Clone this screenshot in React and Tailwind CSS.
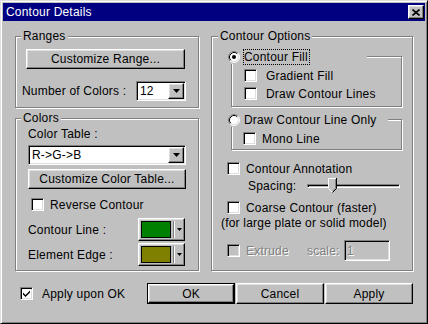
import React from 'react';

const raised =
  'bg-[#c0c0c0] border border-t-white border-l-white border-r-black border-b-black shadow-[inset_-1px_-1px_0_#808080,inset_1px_1px_0_#dfdfdf]';
const sunken =
  'border border-t-[#808080] border-l-[#808080] border-r-white border-b-white shadow-[inset_1px_1px_0_#000,inset_-1px_-1px_0_#dfdfdf]';
const etched = 'border border-[#808080] shadow-[inset_1px_1px_0_#fff,1px_1px_0_#fff]';
const disabledText = 'text-[#808080] [text-shadow:1px_1px_0_#fff]';

const Check = ({ checked, disabled }) => (
  <div className={`w-[13px] h-[13px] shrink-0 flex items-center justify-center ${sunken} ${disabled ? 'bg-[#c0c0c0]' : 'bg-white'}`}>
    {checked && (
      <svg width="9" height="9" viewBox="0 0 9 9">
        <path d="M1 3.5 L3.5 6 L8 1.5 V3.5 L3.5 8 L1 5.5 Z" fill="#000" />
      </svg>
    )}
  </div>
);

const Radio = ({ checked }) => (
  <svg width="12" height="12" viewBox="0 0 12 12" className="shrink-0">
    <circle cx="6" cy="6" r="5" fill="#fff" />
    <path d="M2.11 9.89 A5.5 5.5 0 0 1 9.89 2.11" stroke="#808080" fill="none" />
    <path d="M9.89 2.11 A5.5 5.5 0 0 1 2.11 9.89" stroke="#fff" fill="none" />
    <path d="M2.82 9.18 A4.5 4.5 0 0 1 9.18 2.82" stroke="#000" fill="none" />
    <path d="M9.18 2.82 A4.5 4.5 0 0 1 2.82 9.18" stroke="#dfdfdf" fill="none" />
    {checked && <circle cx="6" cy="6" r="2" fill="#000" />}
  </svg>
);

const Arrow = () => (
  <svg width="7" height="4" viewBox="0 0 7 4">
    <path d="M0 0 H7 L3.5 4 Z" fill="#000" />
  </svg>
);

const Combo = ({ value, width }) => (
  <div className={`${width} h-[20px] bg-white flex items-center ${sunken} p-[1px]`}>
    <span className="flex-1 pl-[2px] leading-[14px]">{value}</span>
    <div className={`w-[16px] h-[16px] flex items-center justify-center ${raised}`}>
      <Arrow />
    </div>
  </div>
);

const ColorPick = ({ color }) => (
  <div className={`w-[47px] h-[23px] flex items-center pl-[2px] ${raised}`}>
    <div className={`w-[30px] h-[17px] border border-black ${color}`} />
    <div className="ml-[2px] w-[2px] h-[17px] border-l border-l-[#808080] border-r border-r-white" />
    <svg width="5" height="3" viewBox="0 0 5 3" className="ml-[2px]">
      <path d="M0 0 H5 L2.5 3 Z" fill="#000" />
    </svg>
  </div>
);

const Group = ({ title, className, children, legendClass = 'ml-[5px]' }) => (
  <fieldset className={`${etched} ${className}`}>
    <legend className={`${legendClass} px-[2px] leading-[14px] bg-[#c0c0c0]`}>{title}</legend>
    {children}
  </fieldset>
);

const App = () => {
  return (
    <div className="w-[428px] h-[324px] bg-[#c0c0c0] text-black text-[12px] tracking-[0.2px] font-['Liberation_Sans',Arial,sans-serif] border border-t-[#dfdfdf] border-l-[#dfdfdf] border-r-black border-b-black shadow-[inset_1px_1px_0_#fff,inset_-1px_-1px_0_#808080] p-[2px] flex flex-col">
      {/* title bar */}
      <div className="h-[18px] bg-[#000080] flex items-center justify-between pl-[3px] pr-[1px]">
        <span className="text-white leading-[14px]">Contour Details</span>
        <div className={`w-[16px] h-[14px] flex items-center justify-center ${raised}`}>
          <svg width="8" height="7" viewBox="0 0 8 7">
            <path d="M0.5 0.5 L7.5 6.5 M7.5 0.5 L0.5 6.5" stroke="#000" strokeWidth="1.6" />
          </svg>
        </div>
      </div>

      <div className="flex pl-[12px] pt-[8px]">
        {/* left column */}
        <div className="w-[184px] flex flex-col">
          <Group title="Ranges" className="h-[79px]">
            <button className={`mt-[6px] ml-[10px] w-[159px] h-[20px] leading-[14px] ${raised}`}>Customize Range...</button>
            <div className="mt-[12px] flex items-center">
              <span className="ml-[6px] w-[114px] leading-[14px]">Number of Colors :</span>
              <Combo value="12" width="w-[50px]" />
            </div>
          </Group>

          <Group title="Colors" className="h-[160px] mt-[3px]">
            <div className="ml-[12px] mt-[2px] leading-[14px]">Color Table :</div>
            <div className="ml-[12px] mt-[4px]">
              <Combo value="R->G->B" width="w-[158px]" />
            </div>
            <button className={`mt-[4px] ml-[12px] w-[158px] h-[20px] leading-[14px] ${raised}`}>Customize Color Table...</button>
            <div className="mt-[9px] ml-[15px] flex items-center h-[13px]">
              <Check />
              <span className="ml-[6px] leading-[14px]">Reverse Contour</span>
            </div>
            <div className="mt-[7px] ml-[12px] flex items-center">
              <span className="w-[110px] leading-[14px]">Contour Line :</span>
              <ColorPick color="bg-[#008000]" />
            </div>
            <div className="mt-[2px] ml-[12px] flex items-center">
              <span className="w-[110px] leading-[14px]">Element Edge :</span>
              <ColorPick color="bg-[#808000]" />
            </div>
          </Group>
        </div>

        {/* right column */}
        <Group title="Contour Options" className="ml-[12px] w-[202px] h-[242px]" legendClass="ml-[6px]">
          <fieldset className={`${etched} mt-[6px] ml-[19px] w-[171px] h-[58px]`}>
            <legend className="ml-[-4px] w-[139px] h-[15px] flex items-center bg-[#c0c0c0]">
              <Radio checked />
              <span className="ml-[3px] border border-dotted border-black leading-[14px] pr-[1px]">Contour Fill</span>
            </legend>
            <div className="mt-[5px] ml-[12px] flex items-center h-[13px]">
              <Check />
              <span className="ml-[9px] leading-[14px]">Gradient Fill</span>
            </div>
            <div className="mt-[5px] ml-[12px] flex items-center h-[13px]">
              <Check />
              <span className="ml-[9px] leading-[14px]">Draw Contour Lines</span>
            </div>
          </fieldset>

          <fieldset className={`${etched} mt-[5px] ml-[19px] w-[171px] h-[38px]`}>
            <legend className="ml-[-4px] w-[160px] h-[15px] flex items-center bg-[#c0c0c0]">
              <Radio />
              <span className="ml-[4px] leading-[14px]">Draw Contour Line Only</span>
            </legend>
            <div className="mt-[5px] ml-[11px] flex items-center h-[13px]">
              <Check />
              <span className="ml-[6px] leading-[14px]">Mono Line</span>
            </div>
          </fieldset>

          <div className="mt-[12px] ml-[15px] flex items-center h-[13px]">
            <Check />
            <span className="ml-[6px] leading-[14px]">Contour Annotation</span>
          </div>
          <div className="mt-[3px] ml-[36px] flex items-center h-[15px]">
            <span className="w-[59px] leading-[14px]">Spacing:</span>
            <div className="relative w-[93px] h-[15px] flex items-center">
              <div className="w-full h-[4px] border border-t-[#808080] border-l-[#808080] border-r-white border-b-white shadow-[inset_1px_1px_0_#000]" />
              <svg width="9" height="15" viewBox="0 0 9 15" className="absolute left-[21px] top-0">
                <path d="M0 0 H9 V10.5 L4.5 15 L0 10.5 Z" fill="#c0c0c0" />
                <path d="M0.5 10.5 V0.5 H8" stroke="#fff" fill="none" />
                <path d="M0.5 10.5 L4.5 14.5" stroke="#fff" fill="none" />
                <path d="M8.5 0 V10.5 L4.5 14.5" stroke="#000" fill="none" />
                <path d="M7.5 1 V10 L4.5 13" stroke="#808080" fill="none" />
              </svg>
            </div>
          </div>
          <div className="mt-[8px] ml-[15px] flex items-center h-[13px]">
            <Check />
            <span className="ml-[6px] leading-[14px]">Coarse Contour (faster)</span>
          </div>
          <div className="mt-[2px] ml-[9px] leading-[14px]">(for large plate or solid model)</div>
          <div className="mt-[10px] ml-[15px] flex items-center h-[21px]">
            <Check disabled />
            <span className={`ml-[6px] w-[61px] leading-[14px] ${disabledText}`}>Extrude</span>
            <span className={`w-[37px] leading-[14px] ${disabledText}`}>scale:</span>
            <div className={`w-[46px] h-[21px] bg-[#c0c0c0] ${sunken} pl-[2px] flex items-center`}>
              <span className={`leading-[14px] ${disabledText}`}>1</span>
            </div>
          </div>
        </Group>
      </div>

      {/* bottom row */}
      <div className="mt-[12px] flex items-center h-[21px] pl-[17px] pr-[12px]">
        <Check checked />
        <span className="ml-[9px] leading-[14px]">Apply upon OK</span>
        <div className="ml-auto flex gap-[1px]">
          <div className="w-[88px] h-[21px] border border-black">
            <button className={`w-full h-full leading-[14px] ${raised}`}>OK</button>
          </div>
          <button className={`w-[88px] h-[21px] leading-[14px] ${raised}`}>Cancel</button>
          <button className={`w-[88px] h-[21px] leading-[14px] ${raised}`}>Apply</button>
        </div>
      </div>
    </div>
  );
};

export default App;
